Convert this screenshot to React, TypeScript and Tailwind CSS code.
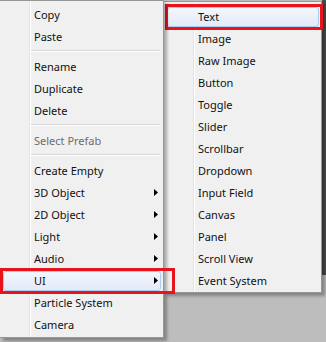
type Item = { label: string; arrow?: boolean; disabled?: boolean; sep?: boolean; mark?: boolean };

const leftItems: Item[] = [
  { label: "Copy" },
  { label: "Paste" },
  { label: "", sep: true },
  { label: "Rename" },
  { label: "Duplicate" },
  { label: "Delete" },
  { label: "", sep: true },
  { label: "Select Prefab", disabled: true },
  { label: "", sep: true },
  { label: "Create Empty" },
  { label: "3D Object", arrow: true },
  { label: "2D Object", arrow: true },
  { label: "Light", arrow: true },
  { label: "Audio", arrow: true },
  { label: "UI", arrow: true, mark: true },
  { label: "Particle System" },
  { label: "Camera" },
];

const uiItems: Item[] = [
  { label: "Text", mark: true },
  { label: "Image" },
  { label: "Raw Image" },
  { label: "Button" },
  { label: "Toggle" },
  { label: "Slider" },
  { label: "Scrollbar" },
  { label: "Dropdown" },
  { label: "Input Field" },
  { label: "Canvas" },
  { label: "Panel" },
  { label: "Scroll View" },
  { label: "Event System" },
];

function Arrow() {
  return (
    <svg width="4" height="7" viewBox="0 0 4 7" className="block">
      <path d="M0 0 L4 3.5 L0 7 Z" fill="#000" />
    </svg>
  );
}

function MenuRow({ item, redBox }: { item: Item; redBox: string }) {
  if (item.sep) {
    return (
      <div className="flex h-[8px] items-center pl-[31px] pr-[3px]">
        <div className="h-[2px] w-full border-t border-[#d7d7d7] border-b-white border-b" />
      </div>
    );
  }
  return (
    <div className="relative flex h-[22px] items-center">
      {item.mark && (
        <div className="absolute inset-[2px_2px_0_3px] rounded-[3px] border border-[#aeccef] bg-gradient-to-b from-[#f4f7fd] to-[#e2e9f8]" />
      )}
      <span
        className={`relative pl-[34px] ${item.disabled ? "text-[#6d6d6d]" : "text-[#111]"}`}
      >
        {item.label}
      </span>
      {item.arrow && (
        <span className="relative ml-auto mr-[5px]">
          <Arrow />
        </span>
      )}
      {item.mark && (
        <div
          className={`pointer-events-none absolute top-[-1px] bottom-[-3px] border-[3px] border-[#e8141c] ${redBox}`}
        />
      )}
    </div>
  );
}

export default function App() {
  return (
    <div
      className="relative flex h-[342px] w-[326px] items-start overflow-hidden bg-[#bdbdbd] text-[11px] leading-none"
      style={{ fontFamily: '"Noto Sans", "Open Sans", sans-serif' }}
    >
      <div className="relative z-10 flex w-[164px] flex-col border-t border-r border-b border-[#979797] bg-[#f0f0f0] pt-[2px] pb-[2px] shadow-[3px_3px_3px_rgba(0,0,0,0.3)]">
        <div className="absolute top-0 bottom-0 left-[29px] w-[2px] border-l border-[#e2e3e3] border-r-white border-r" />
        {leftItems.map((item, i) => (
          <MenuRow key={i} item={item} redBox="left-0 right-[-12px]" />
        ))}
      </div>
      <div className="relative z-0 mt-[1px] ml-[-1px] flex w-[159px] flex-col border border-[#979797] bg-[#f0f0f0] pt-[3px] pb-[1px] shadow-[3px_3px_3px_rgba(0,0,0,0.3)]">
        <div className="absolute top-0 bottom-0 left-[29px] w-[2px] border-l border-[#e2e3e3] border-r-white border-r" />
        {uiItems.map((item, i) => (
          <MenuRow key={i} item={item} redBox="left-[1px] right-[-2px]" />
        ))}
      </div>
      <div className="flex h-full flex-1 flex-col">
        <div className="h-[275px] bg-[#4a4a4a]" />
      </div>
    </div>
  );
}
